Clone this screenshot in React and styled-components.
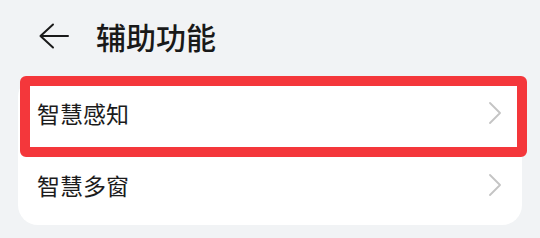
import React from "react";
import styled, { createGlobalStyle } from "styled-components";

const GlobalStyle = createGlobalStyle`
  html, body {
    margin: 0;
    padding: 0;
    background: #f1f3f5;
    font-family: "Noto Sans CJK SC", "Noto Sans", sans-serif;
  }
`;

const Page = styled.div`
  width: 540px;
  height: 238px;
  position: relative;
  overflow: hidden;
`;

const Header = styled.div`
  display: flex;
  align-items: center;
  height: 72px;
  padding-left: 39px;
  box-sizing: border-box;
`;

const BackButton = styled.div`
  display: flex;
  width: 30px;
  height: 26px;
  margin-right: 27px;
`;

const Title = styled.h1`
  margin: 0;
  font-size: 30px;
  font-weight: 500;
  color: #191919;
  line-height: 1;
`;

const Card = styled.div`
  margin: 5px 18px 0;
  background: #fff;
  border-radius: 20px;
  padding-bottom: 4px;
`;

const Row = styled.div`
  position: relative;
  display: flex;
  align-items: center;
  justify-content: space-between;
  height: 72px;
  padding: 0 21px 0 19px;
`;

const Label = styled.span`
  font-size: 23px;
  color: #1c1c1c;
  line-height: 1;
`;

const Highlight = styled.div`
  position: absolute;
  left: 2px;
  right: -5px;
  top: -1px;
  bottom: -8px;
  border: 10px solid #f4373b;
  border-radius: 6px;
  pointer-events: none;
`;

const Chevron = () => (
  <svg width="12" height="22" viewBox="0 0 12 22">
    <polyline
      points="1,1 11,11 1,21"
      fill="none"
      stroke="#c4c4c4"
      strokeWidth="1.8"
      strokeLinecap="round"
      strokeLinejoin="round"
    />
  </svg>
);

const items = [
  { label: "智慧感知", highlighted: true },
  { label: "智慧多窗" },
];

export default function App() {
  return (
    <Page>
      <GlobalStyle />
      <Header>
        <BackButton>
          <svg width="30" height="26" viewBox="0 0 30 26">
            <path
              d="M14 1.5 L1.5 13 L14 24.5 M1.5 13 H29"
              fill="none"
              stroke="#1a1a1a"
              strokeWidth="2"
              strokeLinecap="round"
              strokeLinejoin="round"
            />
          </svg>
        </BackButton>
        <Title>辅助功能</Title>
      </Header>
      <Card>
        {items.map((it) => (
          <Row key={it.label}>
            <Label>{it.label}</Label>
            <Chevron />
            {it.highlighted && <Highlight />}
          </Row>
        ))}
      </Card>
    </Page>
  );
}
